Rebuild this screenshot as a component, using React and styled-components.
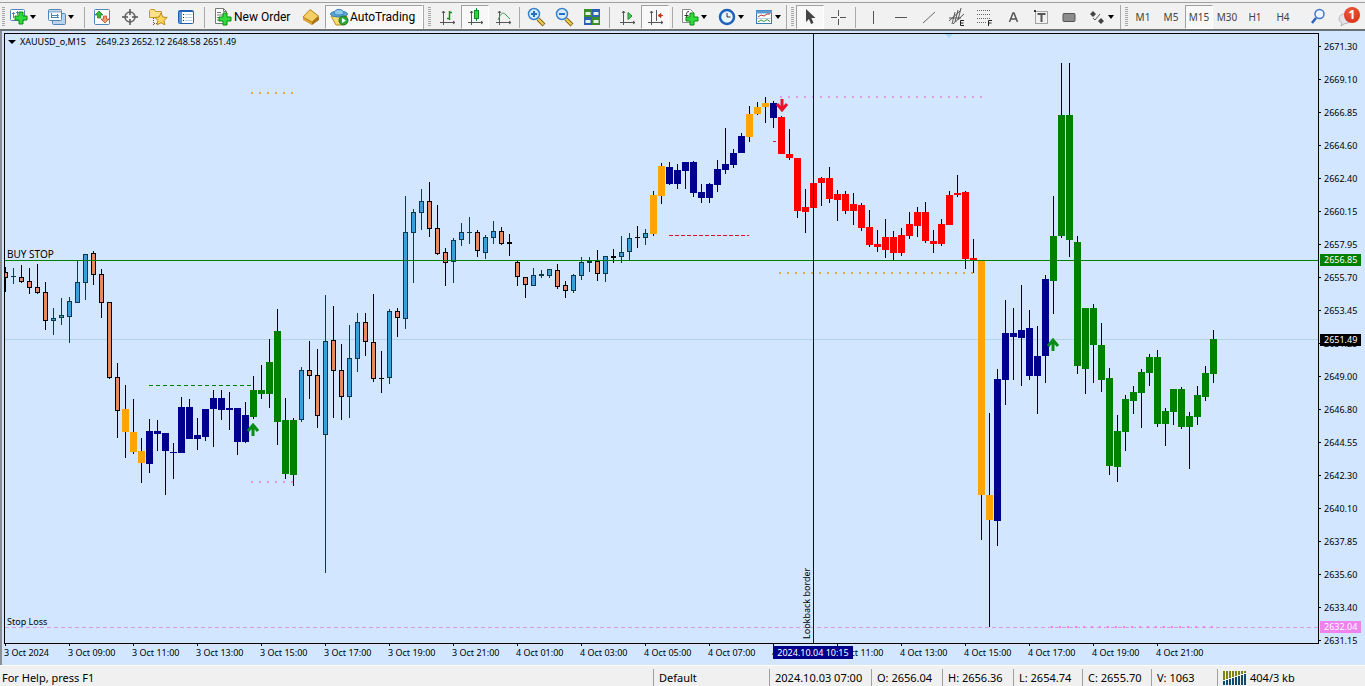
import React, { useState } from 'react';
import styled, { createGlobalStyle } from 'styled-components';

const GlobalStyle = createGlobalStyle`
  * {
    box-sizing: border-box;
  }

  body {
    margin: 0;
    background: #f0f0f0;
    color: #000;
    font-family: 'Noto Sans', 'Open Sans', sans-serif;
    font-size: 12px;
  }
`;

const Terminal = styled.div`
  display: flex;
  flex-direction: column;
  min-height: 100vh;
`;

const Toolbar = styled.header`
  display: flex;
  align-items: center;
  height: 31px;
  padding: 5px 5px 0 0;
  background: linear-gradient(#f0f0f0 2px, #a0a0a0 2px, #a0a0a0 3px, #f1f1f1 3px);
  border-bottom: 2px solid #6b7075;
`;

const Group = styled.div`
  display: flex;
  align-items: center;
  height: 24px;
  border-right: ${props => (props.$last ? 'none' : '1px solid #a9a9a9')};
`;

const Grip = styled.span`
  width: 3px;
  height: 20px;
  margin: 0 ${props => props.$after}px 0 ${props => props.$before}px;
  background: repeating-linear-gradient(#a8a8a8 0 1px, #f0f0f0 1px 2px);
`;

const Divider = styled.span`
  width: 1px;
  height: 21px;
  margin: 0 ${props => props.$gap}px;
  background: #a9a9a9;
`;

const ToolButton = styled.button`
  display: flex;
  align-items: center;
  flex: none;
  width: ${props => props.$width || 28}px;
  height: 24px;
  padding: 0;
  border: 1px solid;
  border-color: ${props => (props.$pressed ? '#a0a0a0 #fff #fff #a0a0a0' : 'transparent')};
  background: ${props => (props.$pressed ? '#f8f8f8' : 'transparent')};
  color: #000;
  font-family: Roboto, 'Noto Sans', sans-serif;
  font-size: 12px;
  white-space: nowrap;

  svg {
    flex: none;
    margin-right: -2px;
  }
`;

const FrameButton = styled(ToolButton)`
  justify-content: center;
  color: #444;
  font-family: 'Noto Sans', 'Open Sans', sans-serif;
  font-size: 10px;
`;

const Caret = styled.span`
  border: 3px solid transparent;
  border-top: 4px solid #000;
  border-bottom: 0;
`;

const Spacer = styled.div`
  flex: 1;
`;

const Notice = styled.div`
  position: relative;
`;

const Badge = styled.span`
  position: absolute;
  top: 2px;
  right: 0;
  width: 16px;
  height: 16px;
  border-radius: 50%;
  background: radial-gradient(circle at 40% 30%, #ee5a3a, #d42a14);
  color: #fff;
  font-size: 12px;
  font-weight: 700;
  line-height: 16px;
  text-align: center;
`;

const ChartWindow = styled.main`
  display: grid;
  grid-template-columns: 1fr 46px;
  grid-template-rows: 611px 21px;
  flex: 1;
  padding: 2px 0 0 2px;
  border-left: 2px solid #8a8f94;
  background: #d2e7ff;
  font-size: 9px;
  line-height: 13px;
`;

const Plot = styled.section`
  position: relative;
  border: 1px solid #000;
`;

const PlotSvg = styled.svg`
  display: block;
  width: 100%;
  height: 100%;
`;

const Heading = styled.h1`
  position: absolute;
  top: 1px;
  left: 3px;
  display: flex;
  align-items: center;
  gap: 4px;
  margin: 0;
  font: inherit;
`;

const HeadingCaret = styled(Caret)`
  border-width: 4px 4px 0;
`;

const Instrument = styled.span`
  min-width: 72px;
`;

const PriceAxis = styled.aside`
  position: relative;
`;

const PriceList = styled.ol`
  margin: 0;
  padding: 7px 0 0;
  list-style: none;
`;

const Price = styled.li`
  display: flex;
  align-items: center;
  gap: 3px;
  height: 13px;
  margin-bottom: 20px;

  &:last-child {
    margin-bottom: 0;
  }

  &::before {
    content: '';
    width: 2px;
    height: 1px;
    background: #000;
  }
`;

const PriceTag = styled.div`
  position: absolute;
  top: ${props => props.$top}px;
  left: 1px;
  width: 41px;
  height: 12px;
  padding-left: 4px;
  background: ${props => props.$color};
  color: #fff;
  line-height: 12px;
`;

const TimeAxis = styled.div`
  position: relative;
  grid-column: 1 / -1;
`;

const TimeList = styled.ol`
  display: flex;
  margin: 0;
  padding: 0;
  list-style: none;
`;

const Time = styled.li`
  flex: 0 0 64px;
  white-space: nowrap;

  &::before {
    content: '';
    display: block;
    width: 1px;
    height: 2px;
    margin-left: 1px;
    background: #000;
  }
`;

const TimeTag = styled.div`
  position: absolute;
  top: 2px;
  left: 769px;
  width: 80px;
  height: 13px;
  background: #00008b;
  color: #fff;
  text-align: center;
  white-space: nowrap;
`;

const StatusBar = styled.footer`
  display: flex;
  align-items: center;
  height: 21px;
  padding-top: 3px;
  border-top: 1px solid #fff;
  background: #f0f0f0;
  font-size: 11px;
  line-height: 17px;
`;

const Help = styled.div`
  flex: 1;
  padding-left: 2px;
`;

const Cell = styled.div`
  display: flex;
  align-items: center;
  gap: 3px;
  width: ${props => props.$width}px;
  padding-left: 5px;
  border-left: 1px solid #a0a0a0;
  white-space: nowrap;
`;

const TONES = {
  s: '#e58a64',
  b: '#3c9fdc',
  k: '#000',
  o: '#ffa500',
  n: '#00008b',
  g: '#008000',
  r: '#ff0000',
};

// tone, wick top, wick bottom, body top, body bottom
const CANDLES = [
  ['s', 267, 292, 272, 278], ['b', 268, 284, 276, 277], ['s', 265, 283, 277, 282],
  ['s', 268, 294, 281, 288], ['s', 264, 294, 287, 293], ['s', 282, 330, 292, 321],
  ['b', 308, 335, 318, 321], ['b', 298, 325, 315, 318], ['b', 297, 343, 301, 317],
  ['b', 261, 302, 282, 303], ['b', 254, 300, 254, 283], ['s', 251, 285, 253, 275],
  ['s', 269, 318, 274, 303], ['s', 302, 379, 302, 378], ['s', 363, 438, 377, 411],
  ['o', 385, 458, 409, 432], ['o', 399, 454, 432, 452], ['o', 438, 483, 451, 463],
  ['n', 419, 473, 431, 464], ['n', 420, 451, 431, 434], ['n', 433, 495, 433, 451],
  ['n', 443, 479, 452, 453], ['n', 397, 453, 407, 453], ['n', 399, 439, 407, 439],
  ['n', 418, 450, 435, 439], ['n', 409, 441, 409, 437], ['n', 390, 447, 398, 409],
  ['n', 390, 420, 398, 410], ['n', 392, 430, 408, 410], ['n', 408, 455, 408, 442],
  ['n', 402, 443, 415, 442], ['g', 376, 419, 390, 417], ['g', 365, 399, 390, 394],
  ['g', 339, 408, 362, 394], ['g', 309, 445, 331, 422], ['g', 398, 479, 420, 474],
  ['g', 418, 486, 420, 475], ['b', 367, 422, 370, 420], ['s', 341, 399, 370, 376],
  ['s', 349, 428, 375, 416], ['b', 295, 573, 341, 435], ['s', 306, 418, 340, 371],
  ['s', 344, 420, 370, 397], ['b', 325, 418, 358, 397], ['b', 313, 372, 322, 359],
  ['s', 313, 356, 322, 342], ['s', 294, 382, 342, 379], ['k', 351, 393, 378, 379],
  ['b', 309, 384, 311, 378], ['s', 308, 337, 311, 318], ['b', 196, 329, 232, 319],
  ['b', 209, 283, 212, 233], ['b', 189, 230, 201, 213], ['s', 182, 237, 201, 229],
  ['s', 205, 255, 228, 254], ['s', 248, 286, 252, 263], ['b', 238, 283, 240, 262],
  ['b', 223, 246, 232, 240], ['b', 217, 244, 232, 233], ['s', 230, 257, 232, 251],
  ['b', 235, 259, 237, 253], ['b', 221, 244, 231, 238], ['s', 227, 245, 231, 244],
  ['k', 234, 256, 242, 244], ['s', 261, 286, 262, 277], ['s', 277, 298, 277, 285],
  ['b', 268, 286, 275, 286], ['b', 270, 278, 274, 276], ['b', 269, 278, 269, 276],
  ['s', 264, 289, 270, 287], ['s', 281, 298, 285, 291], ['b', 274, 293, 275, 291],
  ['b', 257, 280, 262, 276], ['b', 257, 272, 261, 263], ['s', 250, 281, 261, 274],
  ['b', 256, 282, 256, 274], ['k', 249, 263, 256, 258], ['b', 236, 263, 252, 257],
  ['b', 233, 260, 238, 252], ['k', 226, 248, 237, 238], ['b', 229, 245, 233, 238],
  ['o', 191, 236, 195, 234], ['o', 163, 204, 166, 196], ['n', 162, 185, 167, 184],
  ['n', 164, 189, 170, 184], ['n', 162, 189, 162, 171], ['n', 161, 197, 162, 193],
  ['n', 184, 203, 192, 198], ['n', 183, 203, 184, 198], ['n', 160, 192, 169, 185],
  ['n', 128, 174, 164, 170], ['n', 149, 168, 153, 165], ['n', 133, 153, 136, 153],
  ['o', 106, 142, 114, 137], ['o', 102, 115, 107, 114], ['o', 97, 123, 103, 107],
  ['n', 101, 128, 103, 118], ['r', 116, 154, 117, 154], ['r', 129, 160, 154, 158],
  ['r', 158, 218, 158, 211], ['r', 189, 233, 207, 212], ['r', 183, 208, 183, 208],
  ['r', 177, 206, 178, 183], ['r', 167, 203, 178, 199], ['r', 190, 221, 194, 200],
  ['r', 191, 214, 194, 211], ['r', 193, 225, 204, 211], ['r', 203, 231, 205, 228],
  ['r', 210, 247, 227, 245], ['r', 230, 252, 244, 247], ['r', 219, 258, 237, 250],
  ['r', 231, 260, 237, 253], ['r', 228, 256, 235, 253], ['r', 212, 239, 224, 236],
  ['r', 207, 237, 212, 226], ['r', 202, 243, 212, 241], ['r', 230, 253, 241, 244],
  ['r', 219, 246, 224, 244], ['r', 191, 225, 195, 225], ['r', 175, 197, 193, 195],
  ['r', 191, 269, 192, 259], ['r', 239, 273, 258, 260], ['o', 261, 540, 261, 495],
  ['o', 413, 627, 495, 520], ['n', 369, 546, 379, 521], ['n', 300, 405, 333, 380],
  ['n', 308, 380, 333, 337], ['n', 285, 386, 330, 338], ['n', 310, 380, 328, 376],
  ['n', 326, 414, 356, 376], ['n', 275, 383, 279, 356], ['g', 196, 314, 236, 281],
  ['g', 63, 238, 115, 236], ['g', 63, 257, 115, 240], ['g', 236, 374, 242, 366],
  ['g', 308, 394, 308, 369], ['g', 304, 383, 308, 345], ['g', 323, 392, 345, 380],
  ['g', 368, 475, 378, 466], ['g', 415, 482, 431, 467], ['g', 395, 451, 399, 432],
  ['g', 386, 414, 392, 401], ['g', 369, 428, 372, 393], ['g', 354, 386, 357, 373],
  ['g', 350, 427, 357, 424], ['g', 408, 446, 411, 424], ['g', 389, 425, 389, 412],
  ['g', 387, 429, 389, 427], ['g', 412, 469, 416, 427], ['g', 386, 425, 395, 417],
  ['g', 366, 401, 373, 397], ['g', 330, 383, 339, 374],
];

const BAR_STEP = 8;
const ORIGIN_X = 5;
const ORIGIN_Y = 34;

const PRICES = [
  '2671.30', '2669.10', '2666.85', '2664.60', '2662.40', '2660.15', '2657.95',
  '2655.70', '2653.45', '2651.25', '2649.00', '2646.80', '2644.55', '2642.30',
  '2640.10', '2637.85', '2635.60', '2633.40', '2631.15',
];

const TIMES = [
  '3 Oct 2024', '3 Oct 09:00', '3 Oct 11:00', '3 Oct 13:00', '3 Oct 15:00',
  '3 Oct 17:00', '3 Oct 19:00', '3 Oct 21:00', '4 Oct 01:00', '4 Oct 03:00',
  '4 Oct 05:00', '4 Oct 07:00', '4 Oct 09:00', '4 Oct 11:00', '4 Oct 13:00',
  '4 Oct 15:00', '4 Oct 17:00', '4 Oct 19:00', '4 Oct 21:00',
];

const TIMEFRAMES = ['M1', 'M5', 'M15', 'M30', 'H1', 'H4'];

const Plus = ({ x, y }) => (
  <path
    transform={`translate(${x} ${y})`}
    d="M4 0h4v4h4v4H8v4H4V8H0V4h4z"
    fill="#2fdc3a"
    stroke="#0b8a14"
  />
);

const Axes = () => (
  <path d="M8.5 6v14M5 17.5h15M7 8l1.5-2L10 8M18 16l2 1.5L18 19" fill="none" stroke="#555" />
);

const Glass = ({ plus }) => (
  <>
    <path d="M14 14l6 6" stroke="#8a6a10" strokeWidth="4" />
    <path d="M14 14l5.500 5.500" stroke="#f0cf55" strokeWidth="2" />
    <circle cx="10" cy="9" r="5.500" fill="#d6ecff" stroke="#3a80cc" strokeWidth="1.500" />
    <path d={plus ? 'M7 9h6M10 6v6' : 'M7 9h6'} stroke="#2470c0" strokeWidth="2" />
  </>
);

const ICONS = {
  newChart: (
    <>
      <rect x="3.500" y="4.500" width="14" height="11" rx="1" fill="#fff" stroke="#4f86ba" />
      <path d="M6.500 7v6M5 8.500h3M10.500 6v4M9 7.500h3" stroke="#4f86ba" />
      <Plus x={8} y={7} />
    </>
  ),
  profiles: (
    <>
      <rect x="7.500" y="8.500" width="13" height="11" rx="1" fill="#b9d3ea" stroke="#4f86ba" />
      <rect x="3.500" y="4.500" width="13" height="11" rx="1" fill="#fff" stroke="#4f86ba" />
      <path d="M4 6.500h12" stroke="#8fb5d8" strokeWidth="2" />
      <path d="M6.500 8v5M6 12.500h8M6 10.500h7M12 9l1.500 1.500L12 12" fill="none" stroke="#4f86ba" />
    </>
  ),
  market: (
    <>
      <rect x="4.500" y="4.500" width="15" height="15" rx="1" fill="#fff" stroke="#4f86ba" />
      <path d="M9 6l4 4h-2.500v3h-3v-3H5z" fill="#36b83a" stroke="#15801d" strokeWidth=".7" />
      <path d="M15 18l4-4h-2.500v-3h-3v3H11z" fill="#f49a6c" stroke="#c03c18" strokeWidth=".7" />
    </>
  ),
  target: (
    <>
      <circle cx="12" cy="12" r="5" fill="none" stroke="#666" strokeWidth="1.500" />
      <path d="M12 4v6M12 14v6M4 12h6M14 12h6" stroke="#555" strokeWidth="1.500" />
    </>
  ),
  navigator: (
    <>
      <path d="M3.500 12.500v-7l1-1h4l1 2h6v6z" fill="#fbe389" stroke="#c39a25" />
      <path d="M7.500 13v7M8 18.500h4" stroke="#555" strokeDasharray="1 1" />
      <path d="M15 8l1.900 4 4.300.5-3.200 3 .9 4.400-3.900-2.200-3.900 2.200.9-4.400-3.200-3 4.300-.5z" fill="#fbd65b" stroke="#bb8a1c" />
    </>
  ),
  dataWindow: (
    <>
      <rect x="4.500" y="5.500" width="15" height="13" rx="1" fill="#fff" stroke="#1f62b5" />
      <path d="M6.500 6v12" stroke="#5c96d6" strokeWidth="3" />
      <path d="M5 6.500h14" stroke="#1f62b5" />
      <path d="M11 9.500h7M11 12.500h7M11 15.500h7" stroke="#b8d0e8" />
      <path d="M9 9.500h1M9 12.500h1M9 15.500h1" stroke="#222" />
    </>
  ),
  newOrder: (
    <>
      <path d="M4.500 3.500h8l3 3v12h-11z" fill="#fff" stroke="#777" />
      <path d="M12.500 3.500v3h3M6 7.500h4M6 10h7M6 12.500h4M6 15h4" fill="none" stroke="#777" />
      <Plus x={8} y={8} />
    </>
  ),
  gold: (
    <>
      <path d="M4 12l8-7 8 7v3l-7 5-9-6z" fill="#a8741a" />
      <path d="M4 12l7-7.500 8.500 6.500-6.500 6z" fill="#f4cf63" stroke="#b8841f" />
      <path d="M4 12.500l9 5v2.500l-9-5z" fill="#dca634" />
    </>
  ),
  auto: (
    <>
      <path d="M4 11l5 9h6l5-9z" fill="#f6dc72" stroke="#b48d20" />
      <ellipse cx="12" cy="9" rx="8.500" ry="3" fill="#5ea6d8" stroke="#3480b4" />
      <path d="M7 8.500c0-5.500 10-5.500 10 0-2 2-8 2-10 0z" fill="#8ec7ec" stroke="#3480b4" />
      <circle cx="16.500" cy="15.500" r="4.500" fill="#2ea838" stroke="#16771e" />
      <path d="M15 13v5l4-2.500z" fill="#fff" />
    </>
  ),
  bars: (
    <>
      <Axes />
      <path d="M14.500 6v9M12 13.500h2.500M14.500 7.500H17" stroke="#168a24" strokeWidth="1.500" />
    </>
  ),
  candles: (
    <>
      <Axes />
      <path d="M13.500 3v13" stroke="#168a24" />
      <rect x="11.500" y="5.500" width="4" height="8" fill="#2bd43c" stroke="#168a24" />
    </>
  ),
  line: (
    <>
      <Axes />
      <path d="M7 15c3-8 6-8 8-5l4 4" fill="none" stroke="#3a9c47" />
    </>
  ),
  zoomIn: <Glass plus />,
  zoomOut: <Glass />,
  tile: (
    <>
      <rect x="4" y="4" width="8" height="8" fill="#3c8c2c" />
      <rect x="12" y="4" width="8" height="8" fill="#2b5fb0" />
      <rect x="4" y="12" width="8" height="8" fill="#2b5fb0" />
      <rect x="12" y="12" width="8" height="8" fill="#3c8c2c" />
      <path d="M5.500 8.500h5M13.500 8.500h5M5.500 16.500h5M13.500 16.500h5" stroke="#e6f2e6" strokeWidth="3" />
    </>
  ),
  autoScroll: (
    <>
      <Axes />
      <path d="M13 7.500v7l4-3.500z" fill="#4ccd58" stroke="#168a24" />
    </>
  ),
  shift: (
    <>
      <Axes />
      <path d="M13.500 5v11" stroke="#555" />
      <path d="M20 10.500h-4M18 8.500l-3 2 3 2z" fill="#c63a1c" stroke="#c63a1c" />
    </>
  ),
  indicators: (
    <>
      <path d="M4.500 4.500h8l3 3v10h-11z" fill="#fff" stroke="#888" />
      <path d="M11 6.500c-2 0-2.500 1-2.500 3V15M6.500 10.500h4" fill="none" stroke="#333" />
      <Plus x={8} y={8} />
    </>
  ),
  clock: (
    <>
      <circle cx="12" cy="12" r="7" fill="#e8f4ff" stroke="#1d62b8" strokeWidth="2.500" />
      <path d="M12 8v4h3.500" fill="none" stroke="#333" />
    </>
  ),
  template: (
    <>
      <rect x="4.500" y="5.500" width="15" height="13" fill="#fff" stroke="#3b78b4" />
      <path d="M4 7h16" stroke="#5b9bd4" strokeWidth="3" />
      <path d="M6 12l3-2 3 1 3-2h3" fill="none" stroke="#b03a28" />
      <path d="M5 13.500h14" stroke="#bcd" />
      <path d="M6 17l3-2 3 1.500 3-2 3 2" fill="none" stroke="#2e9a3c" />
    </>
  ),
  cursor: <path d="M8 4v13l3-3 2 5 2.500-1-2-5h4z" fill="#444" />,
  cross: <path d="M12.500 5v6M12.500 14v6M5 12.500h6M14 12.500h6" stroke="#555" />,
  vertical: <path d="M12.500 6v13" stroke="#555" />,
  horizontal: <path d="M6 12.500h12" stroke="#555" />,
  trend: <path d="M6 18L18 7" stroke="#666" />,
  channel: (
    <>
      <path d="M4 16L15 6M8 19L19 9M7 19l3-12M10 17l3-12M13 15l3-12M4 13h12" stroke="#555" />
      <path d="M19 15.500h-3.500v5H19M15.500 18h3" fill="none" stroke="#222" />
    </>
  ),
  fibo: (
    <>
      <path d="M4 5.500h14M4 9.500h14M4 13.500h14M4 17.500h9" stroke="#666" strokeDasharray="1 1" />
      <path d="M19 15.500h-3.500V21M15.500 18h3" fill="none" stroke="#222" />
    </>
  ),
  text: <path d="M8.500 17L12 8h1l3.500 9M10 14h5" fill="none" stroke="#555" strokeWidth="1.500" />,
  label: (
    <>
      <rect x="6.500" y="6.500" width="12" height="12" fill="none" stroke="#555" strokeDasharray="1 1" />
      <path d="M8.500 9h8M12.500 9v8" stroke="#555" strokeWidth="2" />
      <path d="M5 5h2v2H5z" fill="#333" />
    </>
  ),
  rectangle: <rect x="6" y="8.500" width="12" height="8" rx="1" fill="#8c8c8c" stroke="#555" />,
  arrows: (
    <>
      <path d="M8 6l3 3-3 3-3-3zM16 13l3 3-3 3-3-3z" fill="#444" />
      <path d="M8 13l2 2 5-6" fill="none" stroke="#555" />
    </>
  ),
  search: (
    <>
      <path d="M10 13l-4 5" stroke="#2f62b8" strokeWidth="2.500" />
      <circle cx="13.500" cy="9" r="4.500" fill="#eef5ff" stroke="#3f75cc" strokeWidth="1.500" />
    </>
  ),
  chat: (
    <path d="M10 9c-5 0-7 7-2 9l-1 3 4-2.500c8 0 8-9.500-1-9.500z" fill="#e4e4e8" stroke="#b4b4bc" />
  ),
};

const Icon = ({ name }) => (
  <svg width="26" height="22" viewBox="-1 1 26 22" aria-hidden="true">
    {ICONS[name]}
  </svg>
);

const Tool = ({ icon, label, pressed, menu, width, children }) => (
  <ToolButton
    type="button"
    aria-label={label}
    aria-haspopup={menu ? 'menu' : undefined}
    $pressed={pressed}
    $width={width}
  >
    <Icon name={icon} />
    {children}
    {menu && <Caret />}
  </ToolButton>
);

const Candle = ({ index, data }) => {
  const [tone, high, low, top, bottom] = data;
  const x = index * BAR_STEP;
  const outlined = tone === 's' || tone === 'b' || tone === 'k';
  const half = outlined ? 2 : 3;
  const height = Math.max(bottom - top, 1);
  const ink = tone === 'b' ? '#0b3b3f' : '#000';

  return (
    <g>
      <rect x={x} y={high - ORIGIN_Y} width="1" height={low - high} fill={ink} />
      <rect
        x={x - half}
        y={top - ORIGIN_Y}
        width={half * 2 + 1}
        height={height}
        fill={outlined ? ink : TONES[tone]}
      />
      {outlined && height > 2 && (
        <rect x={x - 1} y={top - ORIGIN_Y + 1} width="3" height={height - 2} fill={TONES[tone]} />
      )}
    </g>
  );
};

const Level = ({ from, to, y, color, dash, thickness = 1 }) => (
  <line
    x1={from - ORIGIN_X}
    x2={to === undefined ? '100%' : to - ORIGIN_X}
    y1={y - ORIGIN_Y + thickness / 2}
    y2={y - ORIGIN_Y + thickness / 2}
    stroke={color}
    strokeWidth={thickness}
    strokeDasharray={dash}
  />
);

const Signal = ({ x, y, color, down }) => (
  <path
    transform={`translate(${x - ORIGIN_X} ${y - ORIGIN_Y})${down ? ' rotate(180)' : ''}`}
    d="M0 7V-4M-5 2L0-4L5 2"
    fill="none"
    stroke={color}
    strokeWidth="3"
  />
);

const BuyStopLabel = styled.text`
  font-size: 10px;
`;

const Chart = () => (
  <PlotSvg role="img" aria-label="XAUUSD_o M15 candlestick chart">
    <Level from={5} y={339} color="#b4d2e4" />
    {CANDLES.map((data, index) => (
      <Candle key={index} index={index} data={data} />
    ))}
    <Level from={251} to={294} y={92} color="#dfab3c" dash="2 6" thickness={2} />
    <Level from={149} to={254} y={385} color="#008000" dash="4 3" />
    <Level from={251} to={294} y={481} color="#dd94e6" dash="2 6" thickness={2} />
    <Level from={669} to={749} y={235} color="#e01030" dash="4 2" />
    <Level from={773} to={776} y={141} color="#e01030" />
    <Level from={780} to={983} y={96} color="#e29af0" dash="2 6" thickness={2} />
    <Level from={779} to={974} y={272} color="#d8b040" dash="2 6" thickness={2} />
    <Level from={5} y={260} color="#008000" />
    <Level from={5} y={627} color="#d79ade" dash="4 3" />
    <Level from={1051} to={1214} y={626} color="#ee82ee" dash="2 6" thickness={2} />
    <rect x={813 - ORIGIN_X} width="1" height="100%" fill="#00008b" />
    <Signal x={253} y={429} color="#0a8c1c" />
    <Signal x={1053} y={344} color="#0a8c1c" />
    <Signal x={782} y={106} color="#f0102c" down />
    <path d="M940 0h8l-4 4z" fill="#a9d6f5" />
    <BuyStopLabel x="2" y="224">BUY STOP</BuyStopLabel>
    <text x="2" y="591">Stop Loss</text>
    <text transform="translate(805 605) rotate(-90)">Lookback border</text>
  </PlotSvg>
);

const Traffic = () => (
  <svg width="24" height="14" aria-hidden="true">
    {[0, 1, 2, 3, 4, 5, 6, 7].map(bar => (
      <g key={bar}>
        <rect x={bar * 3} y="0" width="2" height={9 - bar} fill="#7c8416" />
        <rect x={bar * 3} y={10 - bar} width="2" height={4 + bar} fill="#104a6c" />
      </g>
    ))}
  </svg>
);

const App = () => {
  const [frame, setFrame] = useState('M15');

  return (
    <Terminal>
      <GlobalStyle />
      <Toolbar>
        <Group>
          <Grip $before={2} $after={0} />
          <Tool icon="newChart" label="New chart" menu width={38} />
          <Tool icon="profiles" label="Profiles" menu width={38} />
          <Divider $gap={3} />
          <Tool icon="market" label="Market watch" />
          <Tool icon="target" label="Data window" />
          <Tool icon="navigator" label="Navigator" />
          <Tool icon="dataWindow" label="Terminal" />
          <Divider $gap={4} />
          <Tool icon="newOrder" label="New Order" width={88}>New Order</Tool>
          <Tool icon="gold" label="MetaEditor" />
          <Tool icon="auto" label="AutoTrading" pressed width={98}>AutoTrading</Tool>
        </Group>
        <Group>
          <Grip $before={4} $after={2} />
          <Tool icon="bars" label="Bar chart" />
          <Tool icon="candles" label="Candlesticks" pressed />
          <Tool icon="line" label="Line chart" />
          <Divider $gap={2} />
          <Tool icon="zoomIn" label="Zoom in" />
          <Tool icon="zoomOut" label="Zoom out" />
          <Tool icon="tile" label="Tile windows" />
          <Divider $gap={3} />
          <Tool icon="autoScroll" label="Auto scroll" />
          <Tool icon="shift" label="Chart shift" pressed />
          <Divider $gap={3} />
          <Tool icon="indicators" label="Indicators" menu width={37} />
          <Tool icon="clock" label="Periods" menu width={37} />
          <Tool icon="template" label="Templates" menu width={36} />
        </Group>
        <Group>
          <Grip $before={4} $after={2} />
          <Tool icon="cursor" label="Cursor" pressed />
          <Tool icon="cross" label="Crosshair" />
          <Divider $gap={3} />
          <Tool icon="vertical" label="Vertical line" />
          <Tool icon="horizontal" label="Horizontal line" />
          <Tool icon="trend" label="Trendline" />
          <Tool icon="channel" label="Equidistant channel" />
          <Tool icon="fibo" label="Fibonacci retracement" />
          <Tool icon="text" label="Text" />
          <Tool icon="label" label="Text label" />
          <Tool icon="rectangle" label="Rectangle" />
          <Tool icon="arrows" label="Arrows" menu width={37} />
        </Group>
        <Group $last>
          <Grip $before={4} $after={1} />
          {TIMEFRAMES.map(name => (
            <FrameButton
              key={name}
              type="button"
              aria-pressed={frame === name}
              $pressed={frame === name}
              onClick={() => setFrame(name)}
            >
              {name}
            </FrameButton>
          ))}
        </Group>
        <Spacer />
        <Tool icon="search" label="Search" />
        <Notice>
          <Tool icon="chat" label="Messages" />
          <Badge>1</Badge>
        </Notice>
      </Toolbar>

      <ChartWindow>
        <Plot>
          <Chart />
          <Heading>
            <HeadingCaret />
            <Instrument>XAUUSD_o,M15</Instrument>
            <span>2649.23 2652.12 2648.58 2651.49</span>
          </Heading>
        </Plot>
        <PriceAxis>
          <PriceList>
            {PRICES.map(price => (
              <Price key={price}>{price}</Price>
            ))}
          </PriceList>
          <PriceTag $top={221} $color="#008000">2656.85</PriceTag>
          <PriceTag $top={301} $color="#000">2651.49</PriceTag>
          <PriceTag $top={588} $color="#ee82ee">2632.04</PriceTag>
        </PriceAxis>
        <TimeAxis>
          <TimeList>
            {TIMES.map(time => (
              <Time key={time}>{time}</Time>
            ))}
          </TimeList>
          <TimeTag>2024.10.04 10:15</TimeTag>
        </TimeAxis>
      </ChartWindow>

      <StatusBar>
        <Help>For Help, press F1</Help>
        <Cell $width={116}>Default</Cell>
        <Cell $width={102}>2024.10.03 07:00</Cell>
        <Cell $width={71}>O: 2656.04</Cell>
        <Cell $width={71}>H: 2656.36</Cell>
        <Cell $width={69}>L: 2654.74</Cell>
        <Cell $width={69}>C: 2655.70</Cell>
        <Cell $width={66}>V: 1063</Cell>
        <Cell $width={148}>
          <Traffic />
          404/3 kb
        </Cell>
      </StatusBar>
    </Terminal>
  );
};

export default App;
